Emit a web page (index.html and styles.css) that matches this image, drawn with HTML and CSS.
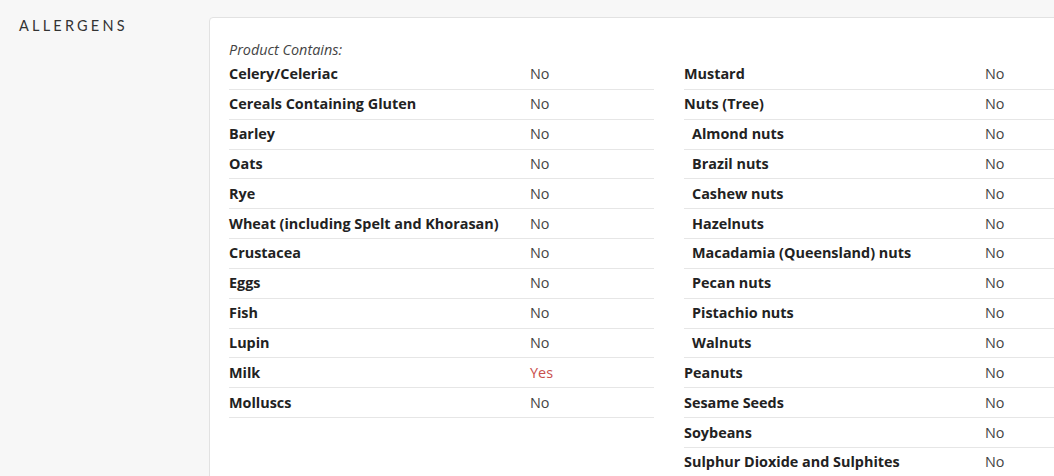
FILE: index.html
```html
<!DOCTYPE html>
<html>
<head>
<meta charset="utf-8">
<link rel="stylesheet" href="styles.css">
</head>
<body>
<div class="page">
  <div class="side"><h2 class="section-title">ALLERGENS</h2></div>
  <div class="card">
    <div class="caption">Product Contains:</div>
    <div class="columns">
      <div class="col">
        <div class="row"><span class="label">Celery/Celeriac</span><span class="val">No</span></div>
        <div class="row"><span class="label">Cereals Containing Gluten</span><span class="val">No</span></div>
        <div class="row"><span class="label">Barley</span><span class="val">No</span></div>
        <div class="row"><span class="label">Oats</span><span class="val">No</span></div>
        <div class="row"><span class="label">Rye</span><span class="val">No</span></div>
        <div class="row"><span class="label">Wheat (including Spelt and Khorasan)</span><span class="val">No</span></div>
        <div class="row"><span class="label">Crustacea</span><span class="val">No</span></div>
        <div class="row"><span class="label">Eggs</span><span class="val">No</span></div>
        <div class="row"><span class="label">Fish</span><span class="val">No</span></div>
        <div class="row"><span class="label">Lupin</span><span class="val">No</span></div>
        <div class="row"><span class="label">Milk</span><span class="val yes">Yes</span></div>
        <div class="row"><span class="label">Molluscs</span><span class="val">No</span></div>
      </div>
      <div class="col">
        <div class="row"><span class="label">Mustard</span><span class="val">No</span></div>
        <div class="row"><span class="label">Nuts (Tree)</span><span class="val">No</span></div>
        <div class="row"><span class="label sub">Almond nuts</span><span class="val">No</span></div>
        <div class="row"><span class="label sub">Brazil nuts</span><span class="val">No</span></div>
        <div class="row"><span class="label sub">Cashew nuts</span><span class="val">No</span></div>
        <div class="row"><span class="label sub">Hazelnuts</span><span class="val">No</span></div>
        <div class="row"><span class="label sub">Macadamia (Queensland) nuts</span><span class="val">No</span></div>
        <div class="row"><span class="label sub">Pecan nuts</span><span class="val">No</span></div>
        <div class="row"><span class="label sub">Pistachio nuts</span><span class="val">No</span></div>
        <div class="row"><span class="label sub">Walnuts</span><span class="val">No</span></div>
        <div class="row"><span class="label">Peanuts</span><span class="val">No</span></div>
        <div class="row"><span class="label">Sesame Seeds</span><span class="val">No</span></div>
        <div class="row"><span class="label">Soybeans</span><span class="val">No</span></div>
        <div class="row"><span class="label">Sulphur Dioxide and Sulphites</span><span class="val">No</span></div>
      </div>
    </div>
  </div>
</div>
</body>
</html>
```
FILE: styles.css
```css
html, body {
  margin: 0;
  padding: 0;
  background: #f7f7f7;
  overflow: hidden;
}
body {
  font-family: "Open Sans", "Liberation Sans", sans-serif;
  font-size: 14.4px;
  color: #333;
}
.page {
  display: flex;
  width: 1200px;
  padding-top: 17px;
}
.side {
  width: 209px;
  flex: none;
}
.section-title {
  margin: 0;
  padding: 1px 0 0 19px;
  font-family: "Lato", "Open Sans", sans-serif;
  font-weight: 400;
  font-size: 14.5px;
  letter-spacing: 3.2px;
  line-height: 16px;
  color: #333;
}
.card {
  flex: none;
  width: 960px;
  height: 600px;
  background: #fff;
  border: 1px solid #e2e2e2;
  border-radius: 4px;
  padding: 21px 19px 20px;
  box-sizing: border-box;
}
.caption {
  font-style: italic;
  color: #444;
  line-height: 21px;
  height: 21px;
}
.columns {
  display: flex;
  gap: 30px;
}
.col {
  width: 425px;
  flex: none;
}
.row {
  display: flex;
  align-items: center;
  height: 29.85px;
  border-bottom: 1px solid #e6e6e6;
  box-sizing: border-box;
  line-height: 20px;
}
.label {
  width: 301px;
  flex: none;
  font-weight: 700;
  color: #222;
}
.label.sub {
  padding-left: 8px;
  box-sizing: border-box;
}
.val {
  color: #444;
}
.val.yes {
  color: #c9504c;
}
```
